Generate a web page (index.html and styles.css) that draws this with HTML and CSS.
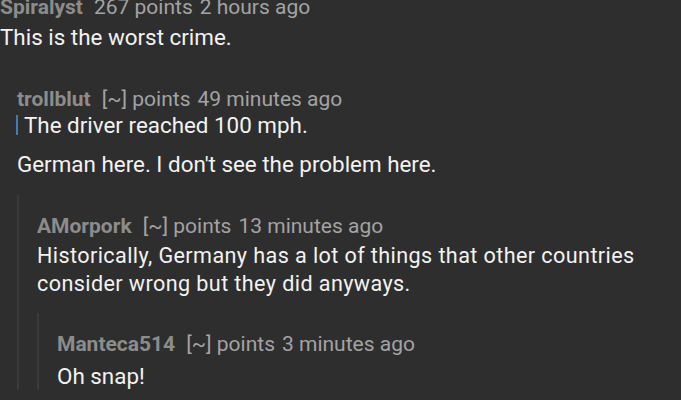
FILE: index.html
```html
<!DOCTYPE html>
<html>
<head>
<meta charset="utf-8">
<link rel="stylesheet" href="styles.css">
</head>
<body>
<div class="thread">
  <div class="comment top">
    <div class="meta"><span class="user">Spiralyst</span><span class="pts">267 points</span><span class="time">2 hours ago</span></div>
    <div class="body"><p>This is the worst crime.</p></div>
    <div class="comment reply">
      <div class="meta"><span class="user">trollblut</span><span class="pts">[~] points</span><span class="time">49 minutes ago</span></div>
      <div class="body">
        <blockquote>The driver reached 100 mph.</blockquote>
        <p>German here. I don't see the problem here.</p>
      </div>
      <div class="comment nested">
        <div class="meta"><span class="user">AMorpork</span><span class="pts">[~] points</span><span class="time">13 minutes ago</span></div>
        <div class="body condensed"><p>Historically, Germany has a lot of things that other countries consider wrong but they did anyways.</p></div>
        <div class="comment nested last">
          <div class="meta"><span class="user">Manteca514</span><span class="pts">[~] points</span><span class="time">3 minutes ago</span></div>
          <div class="body"><p>Oh snap!</p></div>
        </div>
      </div>
    </div>
  </div>
</div>
</body>
</html>
```

FILE: styles.css
```css
html, body {
  margin: 0;
  padding: 0;
  background: #2e2e2e;
  height: 100%;
  overflow: hidden;
}
body {
  font-family: Roboto, "Noto Sans", sans-serif;
  color: #f2f2f2;
}
.thread {
  margin-top: -8px;
}
.meta {
  font-size: 21px;
  line-height: 31px;
  color: #a3a3a3;
  display: flex;
  gap: 7px;
}
.user {
  font-weight: 700;
  color: #8c8c8c;
  margin-right: 4px;
}
.body p {
  margin: 0;
  font-size: 22.4px;
  line-height: 28px;
}
.top > .body {
  padding-bottom: 33px;
}
.reply {
  margin-left: 17px;
}
.reply > .body blockquote {
  margin: 0 0 15px -1px;
  border-left: 2px solid #3f7db3;
  padding-left: 6px;
  font-size: 22.4px;
  line-height: 20px;
}
.nested {
  margin-top: 17px;
  border-left: 2px solid #3a3a3a;
  padding-left: 18px;
  padding-top: 16px;
}
.nested .nested {
  margin-top: 15px;
}
.last > .body {
  margin-top: 2px;
}
.condensed p {
  font-size: 21.6px;
  letter-spacing: 0.4px;
}
```
